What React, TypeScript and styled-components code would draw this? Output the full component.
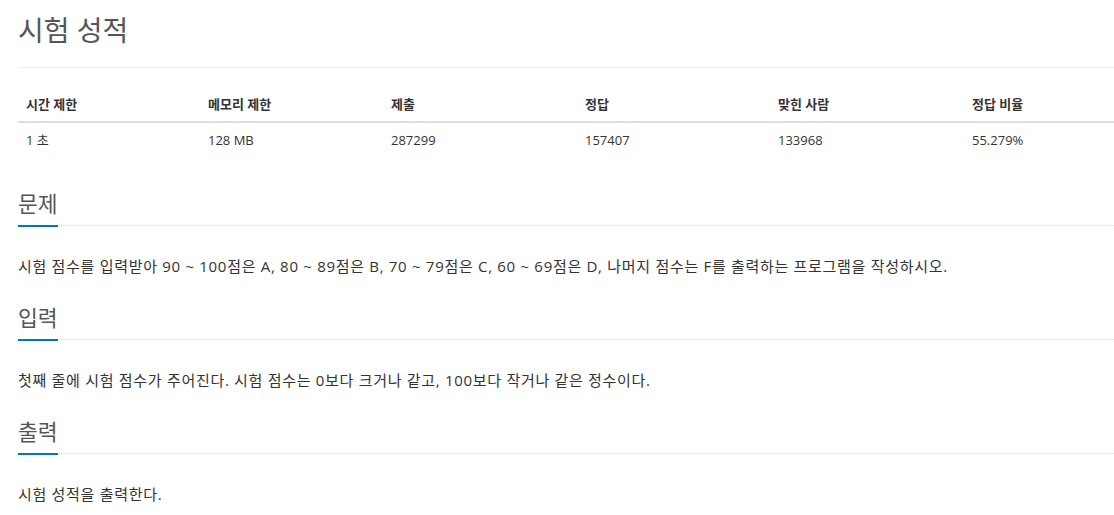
import styled, { createGlobalStyle } from "styled-components";

const GlobalStyle = createGlobalStyle`
  html, body {
    margin: 0;
    padding: 0;
    background: #ffffff;
  }
  body {
    font-family: "Open Sans", "Noto Sans CJK KR", sans-serif;
    color: #333;
  }
`;

type Section = { title: string; text: string };

const limits = [
  { label: "시간 제한", value: "1 초", width: 182 },
  { label: "메모리 제한", value: "128 MB", width: 183 },
  { label: "제출", value: "287299", width: 194 },
  { label: "정답", value: "157407", width: 193 },
  { label: "맞힌 사람", value: "133968", width: 194 },
  { label: "정답 비율", value: "55.279%", width: 150 },
];

const sections: Section[] = [
  {
    title: "문제",
    text: "시험 점수를 입력받아 90 ~ 100점은 A, 80 ~ 89점은 B, 70 ~ 79점은 C, 60 ~ 69점은 D, 나머지 점수는 F를 출력하는 프로그램을 작성하시오.",
  },
  {
    title: "입력",
    text: "첫째 줄에 시험 점수가 주어진다. 시험 점수는 0보다 크거나 같고, 100보다 작거나 같은 정수이다.",
  },
  { title: "출력", text: "시험 성적을 출력한다." },
];

const App = () => {
  return (
    <Page>
      <GlobalStyle />
      <Title>시험 성적</Title>
      <Rule />
      <InfoTable>
        <thead>
          <tr>
            {limits.map((l) => (
              <Th key={l.label} $width={l.width}>
                {l.label}
              </Th>
            ))}
          </tr>
        </thead>
        <tbody>
          <tr>
            {limits.map((l) => (
              <Td key={l.label}>{l.value}</Td>
            ))}
          </tr>
        </tbody>
      </InfoTable>
      <Sections>
        {sections.map((s) => (
          <section key={s.title}>
            <Headline>
              <HeadlineText>{s.title}</HeadlineText>
            </Headline>
            <Text>{s.text}</Text>
          </section>
        ))}
      </Sections>
    </Page>
  );
};

const Page = styled.div`
  padding: 15px 0 0 18px;
  width: 1096px;
`;

const Title = styled.h1`
  margin: 0;
  font-size: 28px;
  line-height: 30px;
  font-weight: 400;
  color: #555;
`;

const Rule = styled.hr`
  margin: 22px 0 0;
  border: none;
  border-top: 1px solid #eee;
`;

const InfoTable = styled.table`
  width: 100%;
  margin-top: 19px;
  border-collapse: collapse;
  border-spacing: 0;
  table-layout: fixed;
`;

const Th = styled.th<{ $width: number }>`
  box-sizing: border-box;
  width: ${({ $width }) => $width}px;
  text-align: left;
  padding: 8px;
  font-size: 13px;
  line-height: 18px;
  font-weight: 700;
  color: #333;
  border-bottom: 2px solid #ddd;
`;

const Td = styled.td`
  padding: 8px;
  font-size: 13px;
  line-height: 18px;
  color: #333;
`;

const Sections = styled.div`
  display: flex;
  flex-direction: column;
  gap: 31px;
  margin-top: 36px;
`;

const Headline = styled.h2`
  display: flex;
  margin: 0 0 30px;
  border-bottom: 1px dotted #ddd;
  font-size: 21.5px;
  line-height: 22px;
  font-weight: 400;
  color: #555;
`;

const HeadlineText = styled.span`
  padding-bottom: 10px;
  border-bottom: 2px solid #0076c0;
  margin-bottom: -2px;
`;

const Text = styled.p`
  margin: 0;
  font-size: 15px;
  line-height: 20px;
  letter-spacing: 0.7px;
  color: #333;
`;

export default App;
